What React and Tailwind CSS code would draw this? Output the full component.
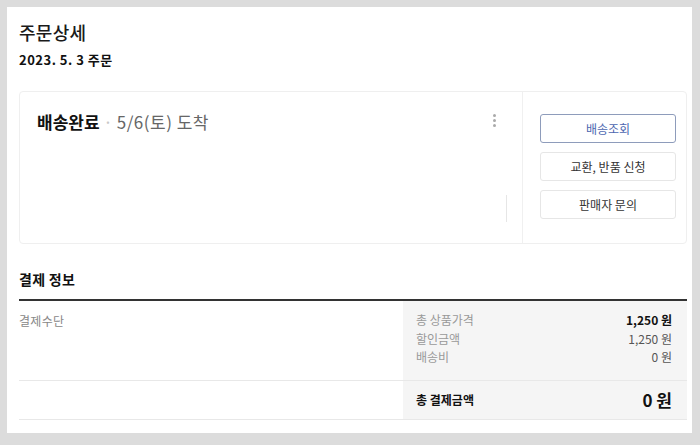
import React from "react";

const font = { fontFamily: '"Noto Sans CJK KR", "Noto Sans", sans-serif' };

function Button({ children, primary }) {
  return (
    <div
      className={
        "h-[29px] flex items-center justify-center rounded-[3px] border text-[12px] leading-[16px] " +
        (primary
          ? "border-[#8e9cbb] text-[#4c66b0]"
          : "border-[#e6e6e6] text-[#333]")
      }
    >
      {children}
    </div>
  );
}

export default function App() {
  return (
    <div
      className="w-[700px] h-[445px] bg-[#dcdcdc] pt-[7px] pl-[7px] pr-[8px] pb-[12px]"
      style={font}
    >
      <div className="h-full bg-white pl-[12px] pr-[5px] flex flex-col">
        <div className="pt-[13px] text-[18px] leading-[24px] font-medium tracking-[0.3px] text-[#1a1a1a]">
          주문상세
        </div>
        <div className="mt-[6px] text-[13px] leading-[20px] font-bold tracking-[0.5px] text-[#111]">
          2023. 5. 3 주문
        </div>

        <div className="mt-[21px] h-[153px] flex border border-[#efefef] rounded-[4px]">
          <div className="flex-1 flex pl-[17px] pt-[18px] pr-[15px] pb-[21px]">
            <div className="flex-1 text-[17px] leading-[24px]">
              <span className="font-bold text-[#111]">배송완료</span>
              <span className="text-[#c8c8c8]"> · </span>
              <span className="text-[#666] tracking-[0.5px]">5/6(토) 도착</span>
            </div>
            <div className="mt-[4px] flex flex-col gap-[2px] items-center">
              <span className="w-[3px] h-[3px] rounded-full bg-[#aaa]" />
              <span className="w-[3px] h-[3px] rounded-full bg-[#aaa]" />
              <span className="w-[3px] h-[3px] rounded-full bg-[#aaa]" />
            </div>
            <div className="ml-[10px] self-end w-px h-[27px] bg-[#e6e6e6]" />
          </div>
          <div className="w-[164px] border-l border-[#f0f0f0] pl-[17px] pr-[10px] pt-[22px] flex flex-col gap-[9px]">
            <Button primary>배송조회</Button>
            <Button>교환, 반품 신청</Button>
            <Button>판매자 문의</Button>
          </div>
        </div>

        <div className="mt-[25px] text-[14px] leading-[20px] font-bold tracking-[0.3px] text-[#111]">
          결제 정보
        </div>
        <div className="mt-[10px] border-t-2 border-[#333]" />

        <div className="flex border-b border-[#e8e8e8]">
          <div className="flex-1 pt-[11px] text-[12px] leading-[18px] tracking-[0.3px] text-[#888]">
            결제수단
          </div>
          <div className="w-[284px] bg-[#f5f5f5] pl-[13px] pr-[15px] pt-[10px] pb-[13px] text-[12px] leading-[18.5px]">
            <div className="flex justify-between">
              <span className="text-[#999]">총 상품가격</span>
              <span className="font-bold text-[#111]">1,250 원</span>
            </div>
            <div className="flex justify-between">
              <span className="text-[#999]">할인금액</span>
              <span className="text-[#555]">1,250 원</span>
            </div>
            <div className="flex justify-between">
              <span className="text-[#999]">배송비</span>
              <span className="text-[#555]">0 원</span>
            </div>
          </div>
        </div>
        <div className="flex border-b border-[#e8e8e8]">
          <div className="flex-1" />
          <div className="w-[284px] h-[38px] bg-[#f5f5f5] pl-[13px] pr-[15px] flex items-center justify-between">
            <span className="text-[12px] font-bold text-[#111]">총 결제금액</span>
            <span className="text-[17px] font-bold text-[#111]">0 원</span>
          </div>
        </div>
      </div>
    </div>
  );
}
